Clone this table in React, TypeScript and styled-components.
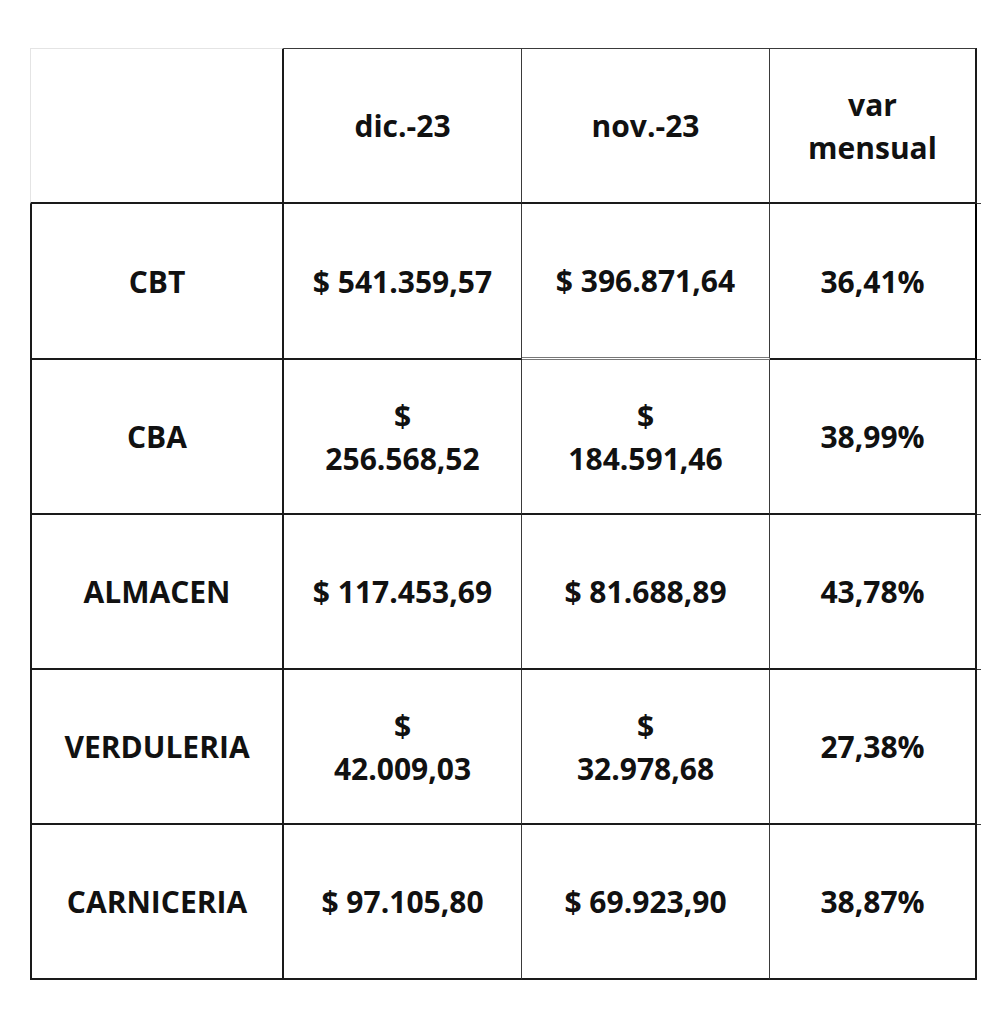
import React from 'react';
import styled, { createGlobalStyle } from 'styled-components';

const GlobalStyle = createGlobalStyle`
  html, body {
    margin: 0;
    padding: 0;
    background: #ffffff;
    overflow: hidden;
  }
  body {
    font-family: "Open Sans", "Noto Sans", "Liberation Sans", sans-serif;
    color: #111111;
  }
`;

const Page = styled.div`
  width: 981px;
  height: 1023px;
  padding: 48px 0 0 30px;
  box-sizing: border-box;
  overflow: hidden;
`;

const Grid = styled.div`
  display: grid;
  grid-template-columns: 254px 238px 248px 207px 60px;
  grid-template-rows: 156px 156px 155px 155px 155px 155px;
  width: max-content;
`;

type Edge = { w: number; c: string } | null;

const Cell = styled.div<{
  $top: Edge;
  $left: Edge;
  $right: Edge;
  $bottom: Edge;
}>`
  box-sizing: border-box;
  display: flex;
  align-items: center;
  justify-content: center;
  text-align: center;
  font-size: 30px;
  font-weight: 700;
  line-height: 43px;
  padding: 0 6px;
  white-space: nowrap;
  border-top: ${({ $top }) => ($top ? `${$top.w}px solid ${$top.c}` : 'none')};
  border-left: ${({ $left }) => ($left ? `${$left.w}px solid ${$left.c}` : 'none')};
  border-right: ${({ $right }) => ($right ? `${$right.w}px solid ${$right.c}` : 'none')};
  border-bottom: ${({ $bottom }) =>
    $bottom ? `${$bottom.w}px ${$bottom.w === 3 ? 'double' : 'solid'} ${$bottom.c}` : 'none'};
`;

const dark = { w: 2, c: '#1a1a1a' };
const thin = { w: 1, c: '#3a3a3a' };
const faint = { w: 1, c: '#e4e4e4' };

const header = ['', 'dic.-23', 'nov.-23', 'var\nmensual'];

const rows: string[][] = [
  ['CBT', '$ 541.359,57', '$ 396.871,64', '36,41%'],
  ['CBA', '$\n256.568,52', '$\n184.591,46', '38,99%'],
  ['ALMACEN', '$ 117.453,69', '$ 81.688,89', '43,78%'],
  ['VERDULERIA', '$\n42.009,03', '$\n32.978,68', '27,38%'],
  ['CARNICERIA', '$ 97.105,80', '$ 69.923,90', '38,87%'],
];

const rightEdge = [dark, thin, thin, dark, null];

const renderText = (text: string) =>
  text.split('\n').map((line, i) => <div key={i}>{line}</div>);

const App = () => {
  const all = [header, ...rows];
  return (
    <>
      <GlobalStyle />
      <Page>
        <Grid>
          {all.map((row, r) =>
            [...row, ''].map((text, c) => {
              const isCorner = r === 0 && c === 0;
              let right = rightEdge[c];
              if (r === 1 && c === 3) right = { w: 2, c: '#000' };
              let bottom: Edge = dark;
              if (r === 1 && c === 2) bottom = { w: 3, c: '#777' };
              if (c === 4) bottom = r === all.length - 1 ? null : thin;
              return (
                <Cell
                  key={`${r}-${c}`}
                  $top={r === 0 && c < 4 ? (isCorner ? faint : thin) : null}
                  $left={c === 0 ? (isCorner ? faint : dark) : null}
                  $right={right}
                  $bottom={bottom}
                >
                  <div>{renderText(text)}</div>
                </Cell>
              );
            })
          )}
        </Grid>
      </Page>
    </>
  );
};

export default App;
